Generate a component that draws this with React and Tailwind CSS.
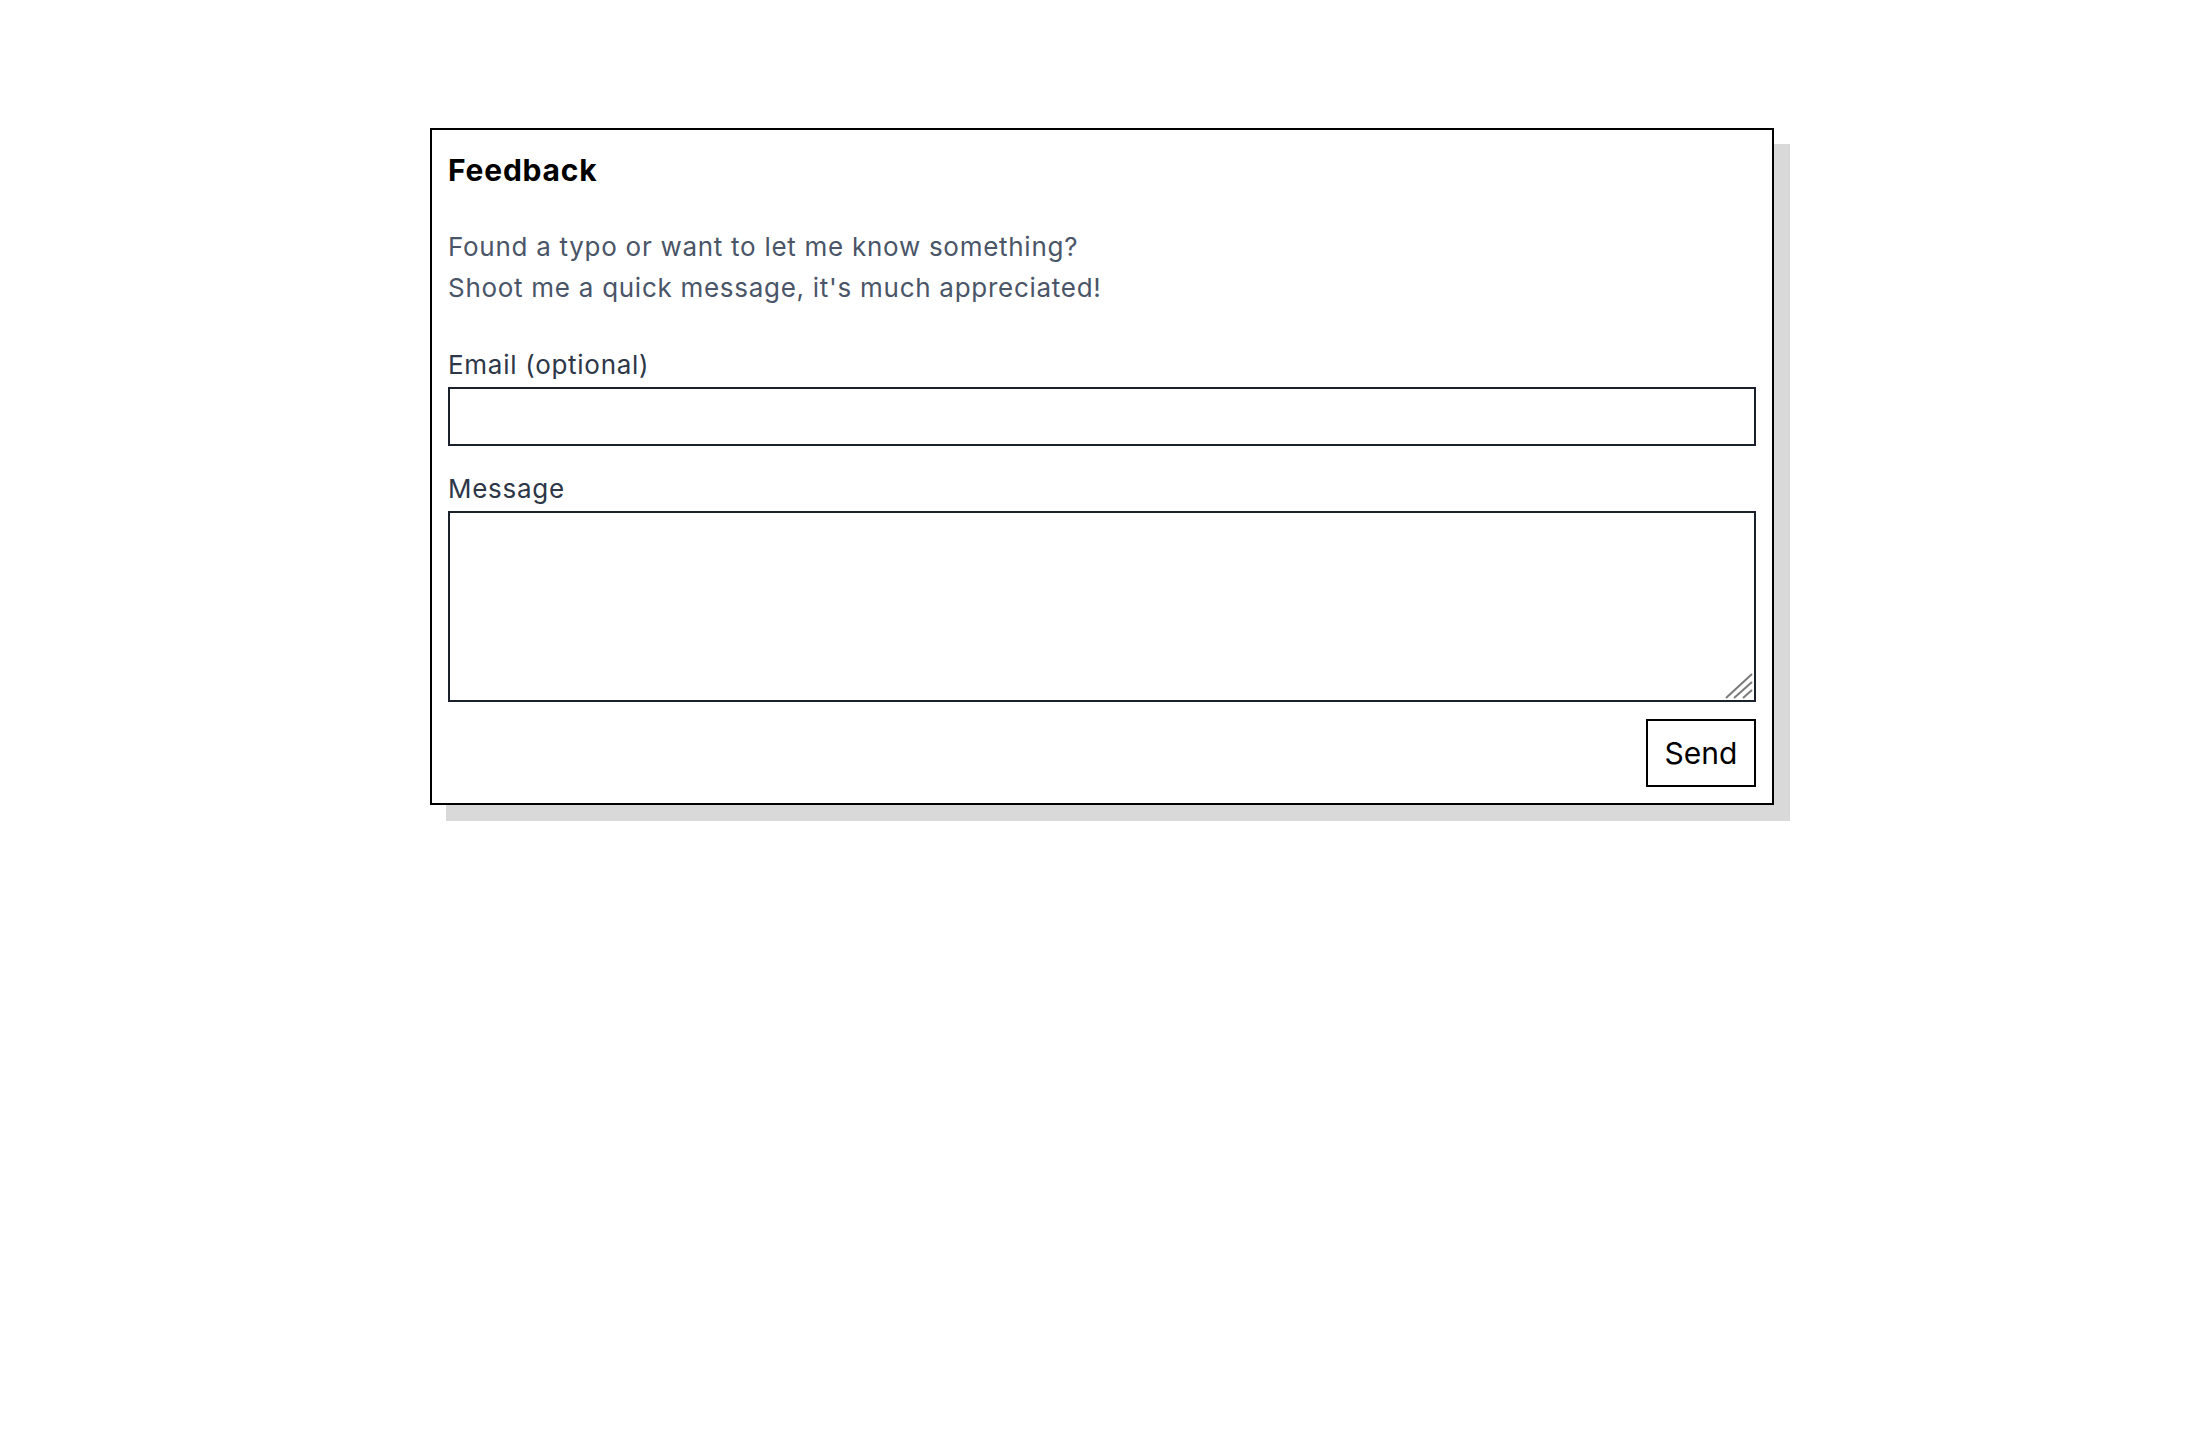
import React from 'react';

// Feedback form card
export default function App() {
  return (
    <div className="min-h-screen bg-white pt-[128px] font-['Inter','Liberation_Sans',sans-serif]">
      <div className="mx-auto w-[1344px] border-2 border-black bg-white p-4 shadow-[16px_16px_0_0_#d9d9d9]">
        <h2 className="text-[30px] font-bold leading-[48px] tracking-[0.8px] text-black">Feedback</h2>

        <p className="mt-[32px] text-[26px] leading-[41px] tracking-[0.72px] text-[#4a5568]">
          Found a typo or want to let me know something?
          <br />
          Shoot me a quick message, it's much appreciated!
        </p>

        <form onSubmit={(e) => e.preventDefault()}>
          <label
            htmlFor="email"
            className="mt-[36px] block text-[26px] leading-[41px] tracking-[0.72px] text-[#2d3748]"
          >
            Email (optional)
          </label>
          <input
            id="email"
            type="email"
            className="mt-[2px] block h-[59px] w-full border-2 border-[#1a202c] bg-white px-3 text-[25px]"
          />

          <label
            htmlFor="message"
            className="mt-[22px] block text-[26px] leading-[41px] tracking-[0.72px] text-[#2d3748]"
          >
            Message
          </label>
          <div className="relative mt-[2px]">
            <textarea
              id="message"
              className="block h-[191px] w-full resize-none border-2 border-[#1a202c] bg-white px-3 py-2 text-[25px]"
            />
            {/* resize grip */}
            <svg
              className="pointer-events-none absolute bottom-[3px] right-[3px]"
              width="28"
              height="26"
              viewBox="0 0 28 26"
              fill="none"
              stroke="#7a7a7a"
              strokeWidth="2"
            >
              <line x1="1" y1="25" x2="27" y2="1" />
              <line x1="9" y1="25" x2="27" y2="9" />
              <line x1="18" y1="25" x2="27" y2="17" />
            </svg>
          </div>

          <div className="mt-[17px] flex justify-end">
            <button
              type="submit"
              className="h-[68px] w-[110px] border-2 border-black bg-white text-[30px] text-black"
            >
              Send
            </button>
          </div>
        </form>
      </div>
    </div>
  );
}
